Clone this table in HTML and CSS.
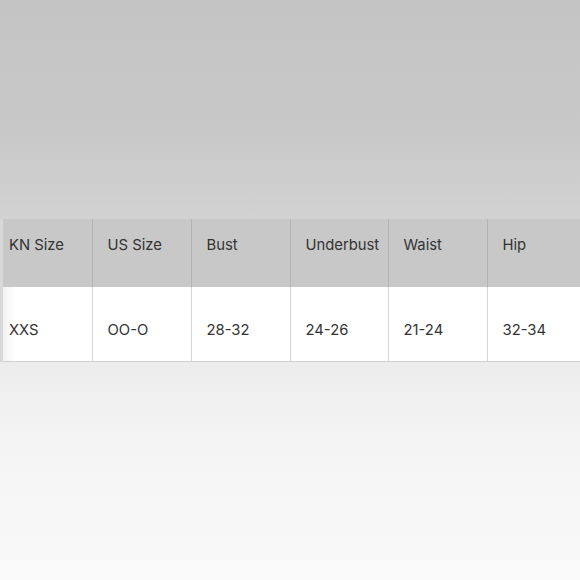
FILE: index.html
```html
<!DOCTYPE html>
<html>
<head>
<meta charset="utf-8">
<link rel="stylesheet" href="styles.css">
</head>
<body>
<div class="page">
  <div class="top"></div>
  <div class="table-wrap">
    <table class="sizes">
      <colgroup>
        <col class="w1">
        <col class="w2">
        <col class="w2">
        <col class="w3">
        <col class="w2">
        <col class="w2">
      </colgroup>
      <thead>
        <tr>
          <th class="c1">KN Size</th>
          <th>US Size</th>
          <th>Bust</th>
          <th>Underbust</th>
          <th>Waist</th>
          <th>Hip</th>
        </tr>
      </thead>
      <tbody>
        <tr>
          <td class="c1">XXS</td>
          <td>OO-O</td>
          <td>28-32</td>
          <td>24-26</td>
          <td>21-24</td>
          <td>32-34</td>
        </tr>
      </tbody>
    </table>
  </div>
  <div class="bottom"></div>
</div>
</body>
</html>
```
FILE: styles.css
```css
html, body {
  margin: 0;
  padding: 0;
}
body {
  width: 580px;
  height: 580px;
  overflow: hidden;
  font-family: Inter, "Liberation Sans", sans-serif;
  color: #2a2a2a;
}
.page {
  display: flex;
  flex-direction: column;
  height: 580px;
}
.top {
  height: 219px;
  background: linear-gradient(to bottom, #c4c4c4 0%, #c8c8c8 60%, #d2d2d2 100%);
}
.table-wrap {
  padding-left: 3px;
  background: #d8d8d8;
  overflow: hidden;
}
.sizes {
  border-collapse: collapse;
  table-layout: fixed;
  width: 583px;
}
.w1 { width: 89px; }
.w2 { width: 99px; }
.w3 { width: 98px; }
.sizes th, .sizes td {
  text-align: left;
  vertical-align: top;
  font-size: 14.8px;
  font-weight: 400;
  padding: 0 0 0 15px;
  box-sizing: border-box;
  white-space: nowrap;
}
.sizes th.c1, .sizes td.c1 {
  padding-left: 6px;
}
.sizes th {
  background: #c8c8c8;
  height: 68px;
  padding-top: 17px;
  border-left: 1px solid #b4b4b4;
  color: #333333;
}
.sizes td {
  background: #ffffff;
  height: 74px;
  padding-top: 34px;
  border-left: 1px solid #d4d4d4;
  border-bottom: 1px solid #cfcfcf;
  color: #333333;
}
.sizes th.c1, .sizes td.c1 {
  border-left: none;
}
.sizes td.c1 {
  background: linear-gradient(to right, #f2f2f2 0px, #ffffff 12px);
}
.bottom {
  flex: 1;
  background: linear-gradient(to bottom, #ececec 0%, #f4f4f4 35%, #f9f9f9 100%);
}
```
